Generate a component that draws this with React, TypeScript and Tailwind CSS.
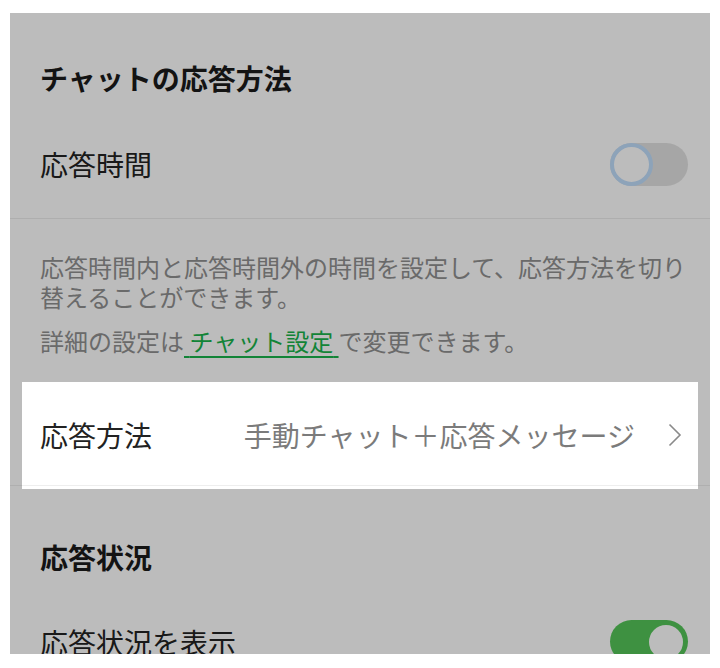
import React from "react";

function ToggleOff() {
  return (
    <div className="w-[78px] h-[43px] rounded-full bg-[#e2e2e2] flex items-center shrink-0">
      <div className="w-[43px] h-[43px] rounded-full bg-white border-[4px] border-[#c0ddfb]" />
    </div>
  );
}

function ToggleOn() {
  return (
    <div className="w-[78px] h-[43px] rounded-full bg-[#55c559] flex items-center justify-end shrink-0">
      <div className="w-[40px] h-[40px] mr-[2px] rounded-full bg-white border-[3px] border-[#55c559]" />
    </div>
  );
}

export default function App() {
  return (
    <div
      className="w-[720px] h-[668px] bg-white pt-[13px] px-[10px]"
      style={{ fontFamily: '"Noto Sans CJK JP", "Noto Sans", sans-serif' }}
    >
      <div className="relative h-[641px] overflow-hidden bg-white">
        {/* Section 1 */}
        <div className="pt-[45px] pb-[12px] px-[30px] text-[28px] leading-[40px] font-bold text-[#1b1b1b]">
          チャットの応答方法
        </div>
        <div className="h-[109px] border-b border-[#ececec] flex items-center justify-between pl-[30px] pr-[22px]">
          <span className="text-[28px] leading-[40px] text-[#222]">応答時間</span>
          <ToggleOff />
        </div>
        <div className="pt-[33px] pb-[29px] pl-[30px] pr-[12px] text-[24px] text-[#909090]">
          <p className="leading-[30px]">
            応答時間内と応答時間外の時間を設定して、応答方法を切り替えることができます。
          </p>
          <p className="leading-[30px] mt-[14px]">
            詳細の設定は
            <span className="text-[#19b34b] underline underline-offset-[5px] decoration-[1.5px]">
              {"\u00a0"}チャット設定{"\u00a0"}
            </span>
            で変更できます。
          </p>
        </div>
        <div className="relative h-[101px] border-b border-[#eeeeee] flex items-center pl-[30px] pr-[28px]">
          <span className="text-[28px] leading-[40px] text-[#222]">応答方法</span>
          <span className="ml-auto text-[28px] leading-[40px] text-[#7b7b7b]">
            手動チャット＋応答メッセージ
          </span>
          <svg className="ml-[33px] shrink-0" width="14" height="24" viewBox="0 0 14 24" fill="none">
            <polyline points="1.5,1.5 12,12 1.5,22.5" stroke="#8a8a8a" strokeWidth="1.6" />
          </svg>
          <div className="absolute -top-[3px] -bottom-[4px] left-[12px] right-[12px] z-10 pointer-events-none shadow-[0_0_0_2000px_rgba(0,0,0,0.263)]" />
        </div>
        {/* Section 2 */}
        <div className="pt-[51px] pb-[12px] px-[30px] text-[28px] leading-[40px] font-bold text-[#1b1b1b]">
          応答状況
        </div>
        <div className="h-[106px] border-b border-[#ececec] flex items-center justify-between pl-[30px] pr-[22px]">
          <span className="text-[28px] leading-[40px] text-[#222]">応答状況を表示</span>
          <ToggleOn />
        </div>
      </div>
    </div>
  );
}
